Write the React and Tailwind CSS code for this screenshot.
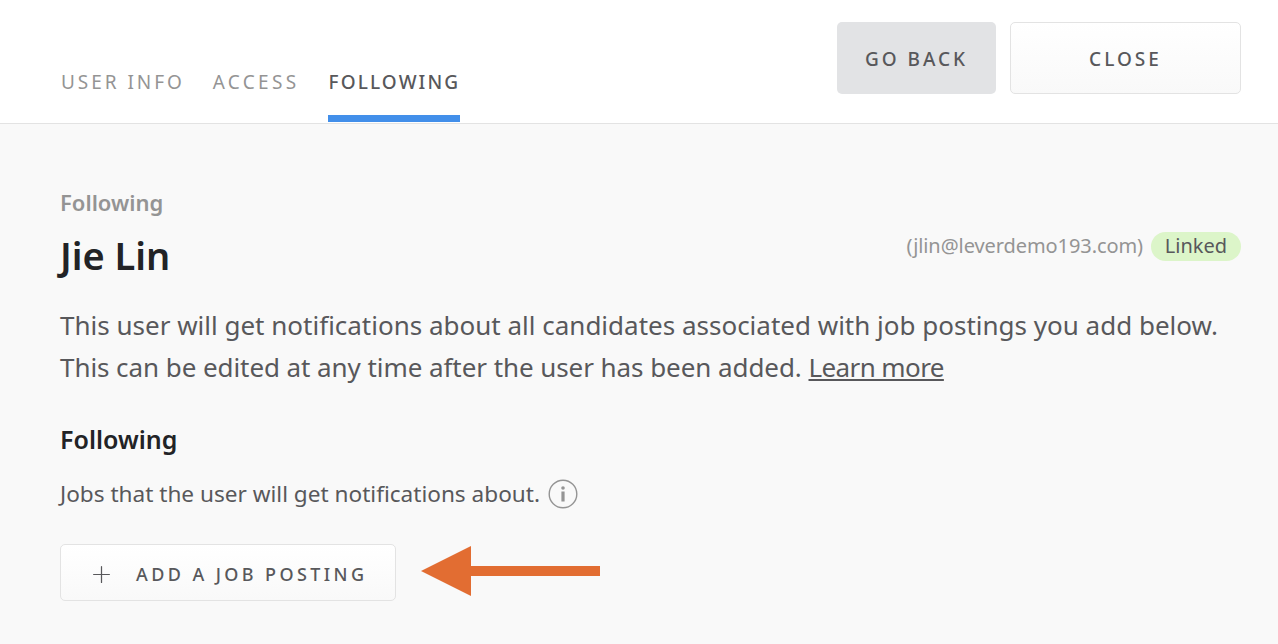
import React from 'react';
import { Plus } from 'lucide-react';

const font = { fontFamily: '"Noto Sans", sans-serif' };

const App = () => {
  return (
    <div className="relative h-[644px] w-[1278px] overflow-hidden bg-[#f9f9f9]" style={font}>
      {/* Header */}
      <div className="flex h-[124px] items-start justify-between border-b border-[#e3e3e3] bg-white pl-[61px] pr-[37px]">
        <div className="flex h-[122px] items-end">
          <div className="flex h-[122px] flex-col items-center justify-end">
            <span className="mb-[20px] text-[19px] leading-[26px] tracking-[2.95px] text-[#949494]">USER INFO</span>
            <span className="h-[7px]"></span>
          </div>
          <div className="ml-[28px] flex h-[122px] flex-col items-center justify-end">
            <span className="mb-[20px] text-[19px] leading-[26px] tracking-[3.3px] text-[#949494]">ACCESS</span>
            <span className="h-[7px]"></span>
          </div>
          <div className="ml-[29px] flex h-[122px] w-[132px] flex-col items-center justify-end">
            <span className="mb-[20px] text-[19px] font-medium leading-[26px] tracking-[2.1px] text-[#58585b]">FOLLOWING</span>
            <span className="h-[7px] w-full bg-[#428fea]"></span>
          </div>
        </div>
        <div className="mt-[22px] flex gap-[14px]">
          <button className="h-[72px] w-[159px] rounded-[5px] bg-[#e2e3e5] pt-[2px] text-[19px] font-medium tracking-[3px] text-[#58585b]">GO BACK</button>
          <button className="h-[72px] w-[231px] rounded-[5px] border border-[#e3e3e3] bg-gradient-to-b from-white to-[#f9f9f9] pt-[2px] text-[19px] font-medium tracking-[3px] text-[#58585b]">CLOSE</button>
        </div>
      </div>

      {/* Body */}
      <div className="pl-[60px] pr-[37px] pt-[62px]">
        <div className="text-[22px] font-semibold leading-[32px] text-[#949494]">Following</div>
        <div className="mt-[11px] flex items-center justify-between">
          <h1 className="text-[38px] font-semibold leading-[52px] text-[#222326]">Jie Lin</h1>
          <div className="mb-[18px] flex items-center gap-[8px]">
            <span className="text-[20px] tracking-[-0.08px] text-[#949494]">(jlin@leverdemo193.com)</span>
            <span className="flex h-[29px] w-[90px] items-center justify-center rounded-full bg-[#dcf5c9] text-[20px] text-[#58585b]">Linked</span>
          </div>
        </div>
        <p className="mt-[23px] text-[26px] leading-[42px] text-[#58585b]">
          This user will get notifications about all candidates associated with job postings you add below.
          <br />
          <span className="tracking-[-0.07px]">This can be edited at any time after the user has been added.</span> <span className="tracking-[-0.6px] underline">Learn more</span>
        </p>
        <div className="mt-[34px] text-[25px] font-semibold leading-[34px] text-[#222326]">Following</div>
        <div className="mt-[23px] flex items-center gap-[8px]">
          <span className="text-[22.6px] leading-[30px] text-[#58585b]">Jobs that the user will get notifications about.</span>
          <svg width="30" height="30" viewBox="0 0 30 30" fill="none">
            <circle cx="15" cy="15" r="13.8" stroke="#949494" strokeWidth="1.4" />
            <circle cx="15" cy="9" r="1.8" fill="#949494" />
            <rect x="13.4" y="12.5" width="3.2" height="10" fill="#949494" />
          </svg>
        </div>
        <button className="mt-[35px] flex h-[57px] w-[336px] items-center rounded-[5px] border border-[#e3e3e3] bg-gradient-to-b from-white to-[#f9f9f9] pl-[27px] pt-[4px] text-[#58585b]">
          <Plus size={27} strokeWidth={1.1} />
          <span className="ml-[21px] text-[18px] font-medium tracking-[3.4px]">ADD A JOB POSTING</span>
        </button>
      </div>

      {/* Annotation arrow */}
      <svg className="absolute left-[421px] top-[546px]" width="180" height="50" viewBox="0 0 180 50">
        <path d="M0 25 L50 0 V20 H179 V30 H50 V50 Z" fill="#e26d32" />
      </svg>
    </div>
  );
};

export default App;
